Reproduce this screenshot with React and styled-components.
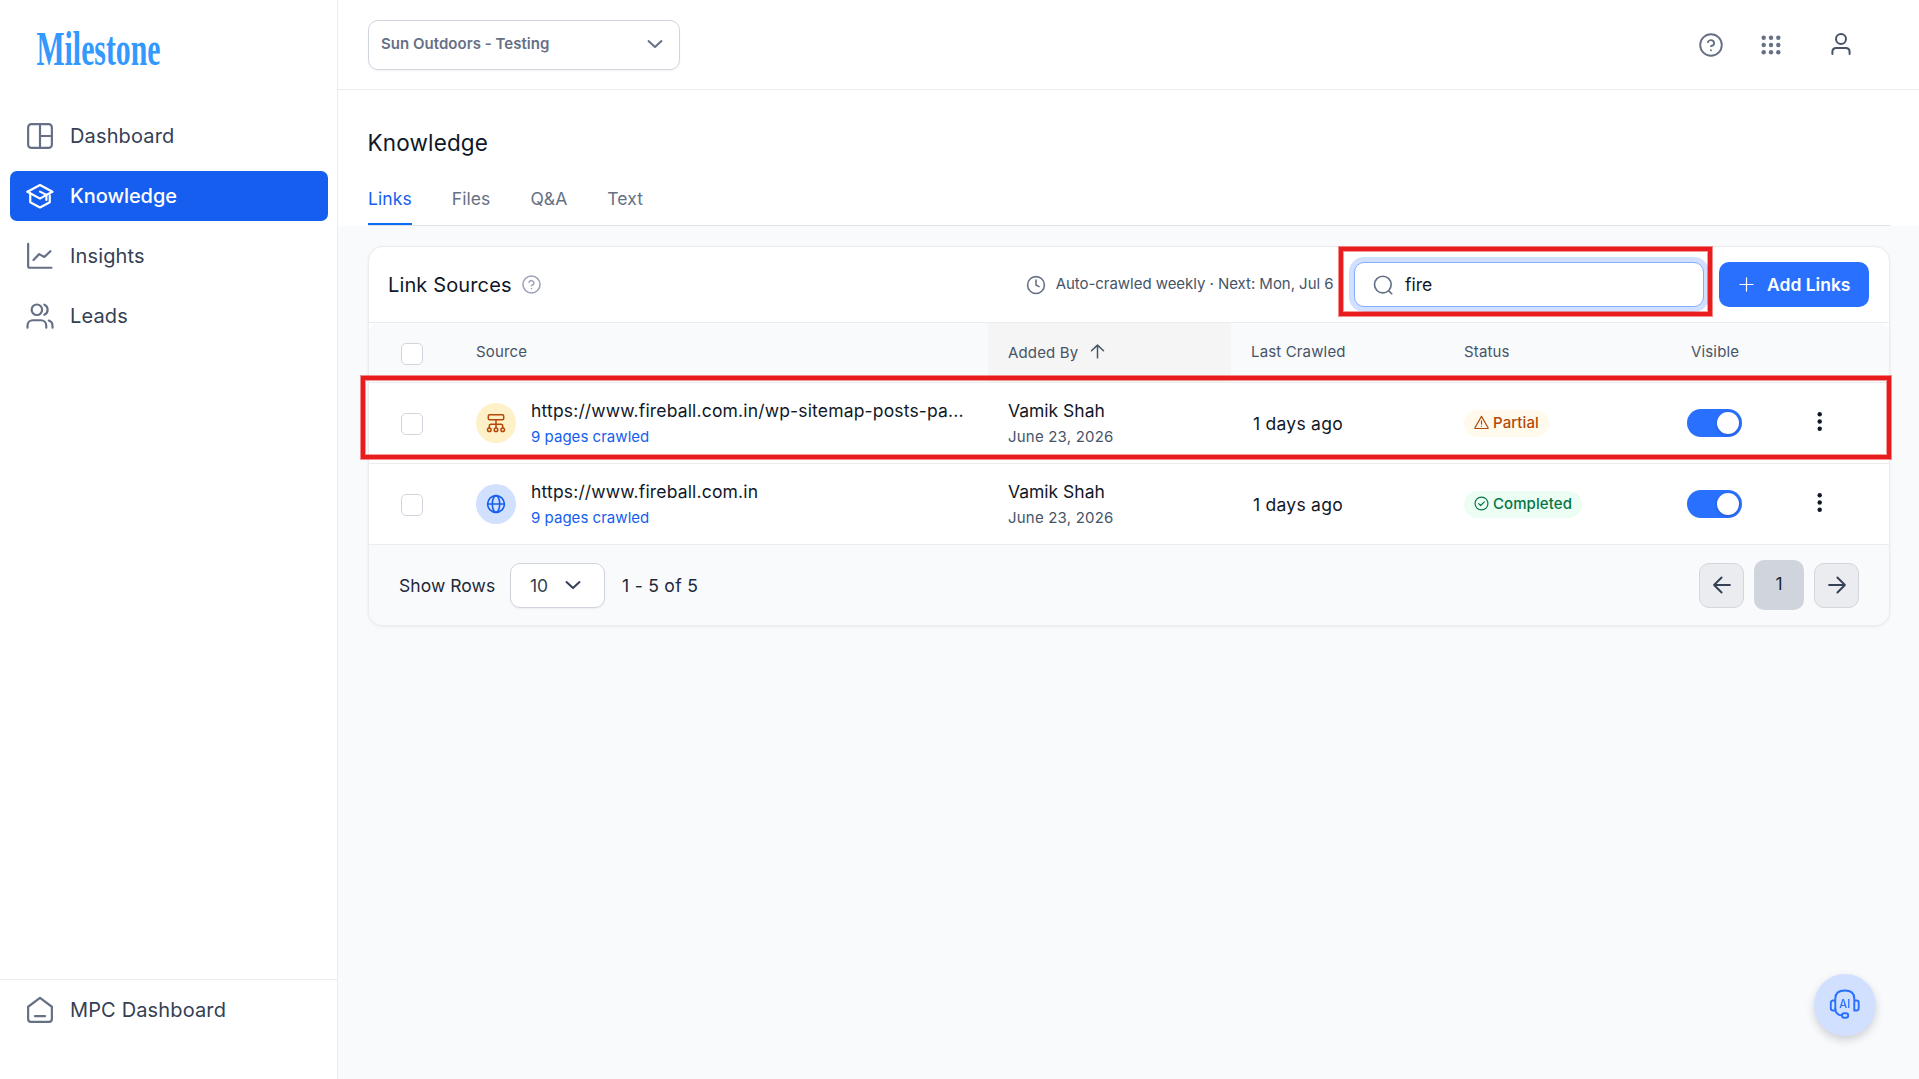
import React from "react";
import styled, { createGlobalStyle, css } from "styled-components";

const GlobalStyle = createGlobalStyle`
  *, *::before, *::after { box-sizing: border-box; }
  html, body { margin: 0; padding: 0; }
  body {
    font-family: Inter, "Liberation Sans", sans-serif;
    background: #f9fafc;
    color: #101828;
    overflow: hidden;
  }
  button { font-family: inherit; padding: 0; margin: 0; cursor: pointer; }
`;

/* ---------- layout ---------- */

const Shell = styled.div`
  display: grid;
  grid-template-columns: 338px 1fr;
  height: 100vh;
  min-height: 1079px;
`;

const Sidebar = styled.aside`
  display: flex;
  flex-direction: column;
  background: #fff;
  border-right: 1px solid #eaecf0;
`;

const LogoBox = styled.div`
  height: 111px;
  padding: 16px 0 0 24px;
  svg { overflow: visible; }
`;

const Nav = styled.nav`
  display: flex;
  flex-direction: column;
  gap: 10px;
  padding: 0 9px 0 10px;
  flex: 1;
`;

const SideFooter = styled.div`
  height: 100px;
  border-top: 1px solid #eaecf0;
  padding: 5px 10px 0;
`;

const NavItem = styled.a`
  display: flex;
  align-items: center;
  gap: 15px;
  height: 50px;
  padding: 0 15px;
  border-radius: 7px;
  font-size: 20px;
  font-weight: ${(p) => (p.$active ? 500 : 400)};
  letter-spacing: ${(p) => (p.$active ? "-0.05px" : "0.14px")};
  line-height: 30px;
  color: ${(p) => (p.$active ? "#fff" : "#344054")};
  background: ${(p) => (p.$active ? "#155eef" : "transparent")};
  svg { color: ${(p) => (p.$active ? "#fff" : "#667085")}; }
`;

const Main = styled.main`
  display: flex;
  flex-direction: column;
  min-width: 0;
`;

const TopBar = styled.header`
  display: flex;
  align-items: center;
  justify-content: space-between;
  height: 90px;
  padding: 0 66px 0 30px;
  background: #fff;
  border-bottom: 1px solid #eaecf0;
`;

const SelectBox = styled.button`
  display: flex;
  align-items: center;
  justify-content: space-between;
  background: #fff;
  border: 1px solid #d0d5dd;
  border-radius: 10px;
  box-shadow: 0 1px 2px rgba(16, 24, 40, 0.05);
`;

const AccountSelect = styled(SelectBox)`
  width: 312px;
  height: 50px;
  padding: 0 14px 2px 12px;
  color: #667085;
  font-size: 15px;
  font-weight: 600;
  letter-spacing: 0.03px;
`;

const RowsSelect = styled(SelectBox)`
  width: 95px;
  height: 45px;
  padding: 0 21px 0 19px;
  color: #344054;
  font-size: 17.5px;
  font-weight: 400;
`;

const TopActions = styled.div`
  display: flex;
  align-items: center;
  color: #667085;
  svg:nth-child(2) { margin-left: 33px; }
  svg:nth-child(3) { margin-left: 43px; margin-bottom: 1px; color: #475467; }
`;

const PageHead = styled.section`
  height: 136px;
  padding: 37px 29px 0 30px;
  background: #fff;
`;

const PageTitle = styled.h1`
  margin: 0 0 0 -0.5px;
  font-size: 22.5px;
  line-height: 32px;
  font-weight: 400;
  letter-spacing: 0.16px;
  color: #101828;
`;

const Tabs = styled.div`
  display: flex;
  gap: 40px;
  height: 67px;
  border-bottom: 1px solid #dfe2e8;
`;

const Tab = styled.a`
  padding-top: 27px;
  height: 66px;
  font-size: 17.5px;
  line-height: 26px;
  font-weight: 400;
  letter-spacing: 0.08px;
  color: ${(p) => (p.$active ? "#155eef" : "#667085")};
  border-bottom: 2px solid ${(p) => (p.$active ? "#0b6cf5" : "transparent")};
`;

/* ---------- card ---------- */

const Body = styled.section`
  padding: 20px 29px 0 30px;
`;

const Card = styled.div`
  border: 1px solid #eaecf0;
  border-radius: 15px;
  overflow: hidden;
  background: #fff;
  box-shadow: 0 1px 3px rgba(16, 24, 40, 0.07);
`;

const CardHead = styled.div`
  display: flex;
  align-items: center;
  height: 76px;
  padding: 0 20px 0 19px;
  border-bottom: 1px solid #eaecf0;
`;

const CardTitle = styled.h2`
  margin: 0 10px 0 0;
  font-size: 20px;
  font-weight: 400;
  line-height: 30px;
  letter-spacing: 0.13px;
`;

const HelpMuted = styled.span`
  display: flex;
  color: #98a2b3;
`;

const CrawlNote = styled.div`
  display: flex;
  align-items: center;
  gap: 10px;
  margin-left: auto;
  margin-right: 20.5px;
  font-size: 15px;
  letter-spacing: -0.04px;
  color: #475467;
  span { margin-top: -3px; }
  svg { color: #667085; }
`;

const Search = styled.label`
  display: flex;
  align-items: center;
  gap: 12px;
  width: 350px;
  height: 45px;
  padding: 0 18px;
  margin-right: 15px;
  border: 1px solid #84adff;
  border-radius: 10px;
  box-shadow: 0 0 0 5px #d1e0ff;
  font-size: 17.5px;
  background: #fff;
  svg { color: #667085; }
`;

const AddButton = styled.button`
  display: flex;
  align-items: center;
  gap: 13px;
  width: 150px;
  height: 45px;
  padding: 0 0 0 20px;
  border: 0;
  border-radius: 10px;
  background: #2970ff;
  color: #fff;
  font-size: 17.5px;
  font-weight: 600;
`;

const rowGrid = css`
  display: grid;
  grid-template-columns: 87px 532px 243px 213px 227px 218px;
`;

const HeadRow = styled.div`
  ${rowGrid}
  height: 60px;
  background: #f9fafc;
  border-bottom: 1px solid #eaecf0;
  border-radius: 10px 10px 0 0;
`;

const Th = styled.div`
  display: flex;
  align-items: center;
  gap: 11px;
  padding: ${(p) => (p.$sorted ? "0 20px" : "0 20px 2px")};
  background: ${(p) => (p.$sorted ? "#f5f5f5" : "transparent")};
  font-size: 15px;
  font-weight: 400;
  letter-spacing: 0.15px;
  color: #475467;
  svg { margin-bottom: 3px; }
`;

const Row = styled.div`
  ${rowGrid}
  height: 81px;
  background: #fff;
  border-bottom: 1px solid #eaecf0;
`;

const Cell = styled.div`
  display: flex;
  align-items: center;
  min-width: 0;
  padding: ${(p) => p.$pad || "0 20px"};
`;

const Check = styled.span`
  width: 22px;
  height: 22px;
  background: #fff;
  border: 1px solid #d0d5dd;
  border-radius: 5px;
`;

const Avatar = styled.span`
  display: flex;
  flex: none;
  align-items: center;
  justify-content: center;
  width: 40px;
  height: 40px;
  margin-right: 15px;
  border-radius: 50%;
  background: ${(p) => (p.$tone === "amber" ? "#fef0c7" : "#d1e0ff")};
  color: ${(p) => (p.$tone === "amber" ? "#b54708" : "#155eef")};
`;

const Stack = styled.div`
  display: flex;
  flex-direction: column;
  min-width: 0;
`;

const Primary = styled.span`
  font-size: 17.5px;
  line-height: 26px;
  letter-spacing: ${(p) => p.$track || 0}px;
  color: #101828;
  white-space: nowrap;
`;

const Secondary = styled.span`
  font-size: 15px;
  line-height: 25px;
  letter-spacing: ${(p) => (p.$link ? 0.03 : 0.2)}px;
  color: ${(p) => (p.$link ? "#155eef" : "#475467")};
`;

const Badge = styled.span`
  display: flex;
  align-items: center;
  gap: 4px;
  height: 27px;
  padding: 0 10px;
  border-radius: 14px;
  font-size: 15px;
  font-weight: 500;
  letter-spacing: 0.08px;
  background: ${(p) => (p.$tone === "amber" ? "#fffaeb" : "#ecfdf3")};
  color: ${(p) => (p.$tone === "amber" ? "#b54708" : "#067647")};
  span { margin-top: -2px; }
  svg { margin-top: -2px; }
`;

const Toggle = styled.span`
  display: flex;
  align-items: center;
  justify-content: flex-end;
  width: 55px;
  height: 28px;
  padding: 3px;
  border-radius: 14px;
  background: #2970ff;
`;

const Knob = styled.span`
  width: 22px;
  height: 22px;
  border-radius: 50%;
  background: #fff;
  box-shadow: 0 1px 3px rgba(16, 24, 40, 0.25);
`;

const DotsCell = styled.span`
  display: flex;
  margin-left: auto;
  margin-bottom: 3px;
`;

const Pager = styled.div`
  display: flex;
  align-items: center;
  height: 80px;
  padding: 0 30px;
  background: #f9fafc;
  color: #1d2939;
  font-size: 17.5px;
`;

const PageCount = styled.span`
  margin-left: 17px;
  letter-spacing: 0.3px;
`;

const RowsLabel = styled.span`
  width: 111px;
  letter-spacing: 0.06px;
`;

const PageButtons = styled.div`
  display: flex;
  align-items: center;
  gap: 10px;
  margin-left: auto;
`;

const PageButton = styled.button`
  display: flex;
  align-items: center;
  justify-content: center;
  width: ${(p) => (p.$current ? 50 : 45)}px;
  height: ${(p) => (p.$current ? 50 : 45)}px;
  padding-bottom: ${(p) => (p.$current ? 4 : 1)}px;
  border: ${(p) => (p.$current ? "0" : "1px solid #d3d6dd")};
  border-radius: 10px;
  background: ${(p) => (p.$current ? "#d0d5dd" : "#eaecf0")};
  color: ${(p) => (p.$current ? "#1d2939" : "#344054")};
  font-size: 17.5px;
`;

/* ---------- overlays ---------- */

const Marker = styled.div`
  position: absolute;
  left: ${(p) => p.$x}px;
  top: ${(p) => p.$y}px;
  width: ${(p) => p.$w}px;
  height: ${(p) => p.$h}px;
  border: 4px solid #e81c1c;
  box-shadow: 0 0 0 1px rgba(232, 28, 28, 0.5), inset 0 0 0 1px rgba(232, 28, 28, 0.45);
  pointer-events: none;
`;

const Assistant = styled.button`
  position: fixed;
  right: 43px;
  bottom: 43px;
  display: flex;
  align-items: center;
  justify-content: center;
  width: 62px;
  height: 62px;
  border: 0;
  border-radius: 50%;
  background: #d1e0ff;
  color: #2970ff;
  box-shadow: 0 4px 8px rgba(16, 24, 40, 0.18);
`;

/* ---------- icons ---------- */

const IconSvg = styled.svg`
  flex: none;
  fill: none;
  stroke: currentColor;
  stroke-linecap: round;
  stroke-linejoin: round;
`;

const Icon = ({ size = 30, stroke = 1.75, box = 24, children }) => (
  <IconSvg width={size} height={size} viewBox={`0 0 ${box} ${box}`} strokeWidth={stroke}>
    {children}
  </IconSvg>
);

const DashboardIcon = () => (
  <Icon><rect x="2.5" y="2.5" width="19" height="19" rx="2.6" /><path d="M12 2.5v19M12 12h9.5" /></Icon>
);
const KnowledgeIcon = () => (
  <Icon>
    <path d="M4.2 10v7l7.8 4.2 7.8-4.2v-5.5" />
    <path d="M2 8.6 12 3.2l10 5.4-4.9 2.5" />
    <path d="M2 8.6l10 5.5 5.1-3-5.1-2.6" />
    <path d="M17.1 11.1v4" />
  </Icon>
);
const InsightsIcon = () => (
  <Icon><path d="M2.5 2.3v17.6c0 1 .4 1.5 1.4 1.5h17.3" /><path d="M6.8 15.2 11.3 10.5l4.2 2.3 4.8-4.6" /></Icon>
);
const UsersIcon = () => (
  <Icon>
    <circle cx="9.5" cy="7" r="4.2" />
    <path d="M15.5 3c1.6.6 2.6 2.1 2.6 4s-1 3.4-2.6 4" />
    <path d="M2 21.3v-1.6c0-2.5 1.8-4.3 4.3-4.3h6.4c2.5 0 4.3 1.8 4.3 4.3v1.6" />
    <path d="M19 15.6c1.8.6 3 2.1 3 4.1v1.6" />
  </Icon>
);
const HomeIcon = () => (
  <Icon><path d="M2.5 9.4 12 2.3l9.5 7.1v9.8c0 1.5-.8 2.3-2.3 2.3H4.8c-1.5 0-2.3-.8-2.3-2.3z" /><path d="M8 16.9h8" /></Icon>
);
const HelpIcon = ({ size, stroke }) => (
  <Icon size={size} stroke={stroke}>
    <circle cx="12" cy="12" r="10.8" />
    <path d="M8.9 9.2a3.2 3.2 0 0 1 6.2 1c0 2.1-3.1 3-3.1 3" /><path d="M12 17.2h.01" />
  </Icon>
);
const GridIcon = () => (
  <svg width="30" height="30" viewBox="0 0 30 30" fill="currentColor">
    {[7.7, 15, 22.3].map((y) => [7.7, 15, 22.3].map((x) => <circle key={`${x}-${y}`} cx={x} cy={y} r="2.2" />))}
  </svg>
);
const UserIcon = () => (
  <Icon size={24} stroke={2}><circle cx="12" cy="7.1" r="5" /><path d="M3.4 22v-2.2c0-2.3 1.5-3.9 3.9-3.9h9.4c2.4 0 3.9 1.6 3.9 3.9v2.2" /></Icon>
);
const ChevronIcon = () => <Icon size={20} stroke={2.4}><path d="M4.2 8.5l7.8 7.2 7.8-7.2" /></Icon>;
const ClockIcon = () => <Icon size={20} stroke={1.9}><circle cx="12" cy="12" r="10.1" /><path d="M12 6v6l3.6 2" /></Icon>;
const SearchIcon = () => <Icon size={20} stroke={2}><circle cx="11.8" cy="11.5" r="10" /><path d="M19 19l3.5 3.5" /></Icon>;
const PlusIcon = () => <Icon size={15} stroke={1.9}><path d="M12 1.5v21M1.5 12h21" /></Icon>;
const ArrowUpIcon = () => <Icon size={17} stroke={2.1}><path d="M12 21V3M3.5 11 12 3l8.5 8" /></Icon>;
const ArrowIcon = ({ right }) => (
  <Icon size={20} stroke={2.3}>
    {right ? <path d="M2.5 12h19M12.5 3l9 9-9 9" /> : <path d="M21.5 12h-19M11.5 3l-9 9 9 9" />}
  </Icon>
);
const SitemapIcon = () => (
  <Icon size={20} box={20} stroke={1.5}>
    <rect x="2.3" y="1.7" width="15.4" height="5" rx="1.2" />
    <path d="M10 6.7v8M3.3 14.7v-1.6c0-1.2.5-1.8 1.7-1.8h10c1.2 0 1.7.6 1.7 1.8v1.6" />
    <circle cx="3.3" cy="16.7" r="1.8" /><circle cx="10" cy="16.7" r="1.8" /><circle cx="16.7" cy="16.7" r="1.8" />
  </Icon>
);
const GlobeIcon = () => (
  <Icon size={20} box={20} stroke={1.6}>
    <circle cx="10" cy="10" r="8.4" /><ellipse cx="10" cy="10" rx="3.7" ry="8.4" /><path d="M1.6 10h16.8" />
  </Icon>
);
const WarnIcon = () => (
  <Icon size={15} stroke={1.9}><path d="M12 2.2 1.5 20.5c-.3.6 0 1.1.6 1.1h19.8c.6 0 .9-.5.6-1.1z" /><path d="M12 9.5v5M12 17.8h.01" /></Icon>
);
const DoneIcon = () => (
  <Icon size={15} stroke={1.9}><circle cx="12" cy="12" r="10.3" /><path d="M7.5 12.2l3.1 3 5.9-5.9" /></Icon>
);
const DotsIcon = () => (
  <svg width="6" height="22" viewBox="0 0 6 22" fill="#101828">
    <circle cx="2.7" cy="3.3" r="2.2" /><circle cx="2.7" cy="10.5" r="2.2" /><circle cx="2.7" cy="17.8" r="2.2" />
  </svg>
);
const AssistantIcon = () => (
  <svg width="32" height="32" viewBox="0 0 32 32" fill="none" stroke="currentColor" strokeWidth="1.9">
    <path d="M6.3 20V9.5c0-5.2 3.6-8 9.5-8s9.5 2.8 9.5 8V21" />
    <path d="M6.3 11.5H4c-1.4 0-2.2.8-2.2 2.2v5.6c0 1.4.8 2.2 2.2 2.2h2.3" />
    <path d="M25.3 11.5h2.2c1.4 0 2.2.8 2.2 2.2v5.6c0 1.4-.8 2.2-2.2 2.2h-3" />
    <path d="M6.3 19c0 4.5 2.5 7.2 6.7 7.4" />
    <rect x="13" y="24.2" width="6.2" height="4.5" rx="2.25" />
    <text x="10.3" y="19.3" fontSize="12" fontWeight="500" stroke="none" fill="currentColor"
      fontFamily="Inter, sans-serif" textLength="11" lengthAdjust="spacingAndGlyphs">AI</text>
  </svg>
);
const Logo = () => (
  <svg width="150" height="74" viewBox="0 0 150 74">
    <text x="12.5" y="48.5" fontSize="47.5" fontWeight="700" fill="#3399ff" fontFamily='"Liberation Serif", serif'
      textLength="124" lengthAdjust="spacingAndGlyphs">Milestone</text>
  </svg>
);

/* ---------- data ---------- */

const navItems = [
  { label: "Dashboard", icon: DashboardIcon },
  { label: "Knowledge", icon: KnowledgeIcon, active: true },
  { label: "Insights", icon: InsightsIcon },
  { label: "Leads", icon: UsersIcon },
];

const sources = [
  { url: "https://www.fireball.com.in/wp-sitemap-posts-pa...", icon: SitemapIcon, tone: "amber", status: "Partial", statusIcon: WarnIcon, statusTone: "amber" },
  { url: "https://www.fireball.com.in", icon: GlobeIcon, tone: "blue", status: "Completed", statusIcon: DoneIcon, statusTone: "green" },
];

function SourceRow({ item }) {
  const Glyph = item.icon;
  const StatusGlyph = item.statusIcon;
  return (
    <Row>
      <Cell $pad="2px 0 0 32px"><Check /></Cell>
      <Cell>
        <Avatar $tone={item.tone}><Glyph /></Avatar>
        <Stack><Primary $track={0.17}>{item.url}</Primary><Secondary $link>9 pages crawled</Secondary></Stack>
      </Cell>
      <Cell><Stack><Primary>Vamik Shah</Primary><Secondary>June 23, 2026</Secondary></Stack></Cell>
      <Cell $pad="2px 20px 0 22px"><Primary $track={0.25}>1 days ago</Primary></Cell>
      <Cell $pad="1px 20px 0"><Badge $tone={item.statusTone}><StatusGlyph /><span>{item.status}</span></Badge></Cell>
      <Cell $pad="0 66px 0 16px"><Toggle><Knob /></Toggle><DotsCell><DotsIcon /></DotsCell></Cell>
    </Row>
  );
}

export default function App() {
  return (
    <>
      <GlobalStyle />
      <Shell>
        <Sidebar>
          <LogoBox><Logo /></LogoBox>
          <Nav>
            {navItems.map(({ label, icon: Glyph, active }) => (
              <NavItem key={label} $active={active}><Glyph />{label}</NavItem>
            ))}
          </Nav>
          <SideFooter><NavItem><HomeIcon />MPC Dashboard</NavItem></SideFooter>
        </Sidebar>
        <Main>
          <TopBar>
            <AccountSelect>Sun Outdoors - Testing<ChevronIcon /></AccountSelect>
            <TopActions><HelpIcon size={24} stroke={1.9} /><GridIcon /><UserIcon /></TopActions>
          </TopBar>
          <PageHead>
            <PageTitle>Knowledge</PageTitle>
            <Tabs>
              <Tab $active>Links</Tab><Tab>Files</Tab><Tab>Q&amp;A</Tab><Tab>Text</Tab>
            </Tabs>
          </PageHead>
          <Body>
            <Card>
              <CardHead>
                <CardTitle>Link Sources</CardTitle>
                <HelpMuted><HelpIcon size={19} stroke={1.9} /></HelpMuted>
                <CrawlNote><ClockIcon /><span>Auto-crawled weekly · Next: Mon, Jul 6</span></CrawlNote>
                <Search><SearchIcon /><span>fire</span></Search>
                <AddButton><PlusIcon />Add Links</AddButton>
              </CardHead>
              <HeadRow>
                <Cell $pad="2px 0 0 32px"><Check /></Cell>
                <Th>Source</Th>
                <Th $sorted>Added By<ArrowUpIcon /></Th>
                <Th>Last Crawled</Th>
                <Th>Status</Th>
                <Th>Visible</Th>
              </HeadRow>
              {sources.map((item) => <SourceRow key={item.url} item={item} />)}
              <Pager>
                <RowsLabel>Show Rows</RowsLabel>
                <RowsSelect>10<ChevronIcon /></RowsSelect>
                <PageCount>1 - 5 of 5</PageCount>
                <PageButtons>
                  <PageButton><ArrowIcon /></PageButton>
                  <PageButton $current>1</PageButton>
                  <PageButton><ArrowIcon right /></PageButton>
                </PageButtons>
              </Pager>
            </Card>
          </Body>
        </Main>
      </Shell>
      <Marker $x={1339} $y={247} $w={373} $h={69} />
      <Marker $x={361} $y={376} $w={1530} $h={83} />
      <Assistant><AssistantIcon /></Assistant>
    </>
  );
}
